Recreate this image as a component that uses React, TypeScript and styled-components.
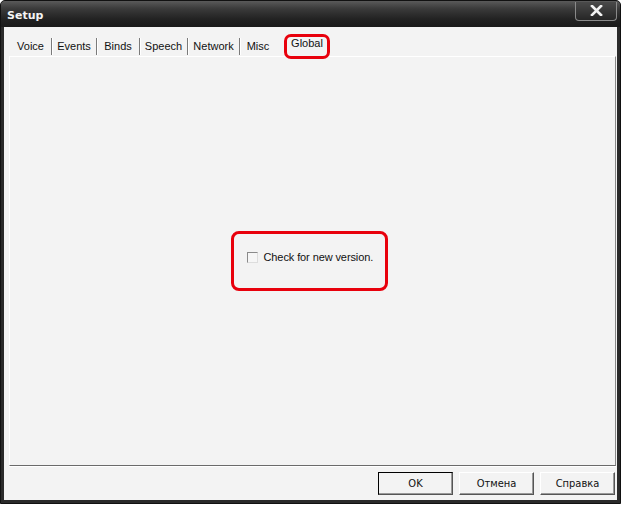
import React from "react";
import styled, { createGlobalStyle } from "styled-components";

const Global = createGlobalStyle`
  html, body { margin: 0; padding: 0; background: #ffffff; }
  body { font-family: "Liberation Sans", Arial, sans-serif; }
`;

const Window = styled.div`
  width: 621px;
  height: 504px;
  box-sizing: border-box;
  background: #2a2a2a;
  border: 1px solid #111;
  border-radius: 5px 5px 0 0;
  display: flex;
  flex-direction: column;
  padding: 0 3px 3px 3px;
`;

const TitleBar = styled.div`
  height: 26px;
  margin: 0 -3px;
  border-radius: 4px 4px 0 0;
  background: linear-gradient(#5a5a5a 0%, #3a3a3a 30%, #222 70%, #1a1a1a 100%);
  display: flex;
  align-items: center;
  justify-content: space-between;
  padding: 0 3px 0 6px;
`;

const Title = styled.span`
  color: #f4f4f4;
  font-family: "DejaVu Sans", sans-serif;
  font-weight: bold;
  font-size: 11px;
  margin-top: 2px;
`;

const CloseButton = styled.div`
  width: 42px;
  height: 19px;
  margin-top: -6px;
  box-sizing: border-box;
  border: 1px solid #8a8a8a;
  border-top: none;
  border-radius: 0 0 4px 4px;
  background: linear-gradient(#4a4a4a, #262626);
  display: flex;
  align-items: center;
  justify-content: center;
`;

const Client = styled.div`
  flex: 1;
  background: #f3f3f3;
  display: flex;
  flex-direction: column;
  padding: 7px 1px 5px 5px;
`;

const TabRow = styled.div`
  display: flex;
  align-items: flex-end;
  height: 22px;
  padding-left: 1px;
`;

const Tab = styled.div<{ $w: number; $sep?: boolean }>`
  width: ${(p) => p.$w}px;
  box-sizing: border-box;
  text-align: center;
  font-size: 11px;
  color: #111;
  height: 17px;
  line-height: 16px;
  margin-bottom: 1px;
  border-right: ${(p) => (p.$sep ? "1px solid #7a7a7a" : "none")};
  box-shadow: ${(p) => (p.$sep ? "1px 0 0 #fff" : "none")};
`;

const SelectedTab = styled.div`
  position: relative;
  width: 46px;
  margin-left: 8px;
  text-align: center;
  font-size: 11px;
  color: #111;
  height: 18px;
  line-height: 17px;
  margin-bottom: 3px;
`;

const Highlight = styled.div`
  position: absolute;
  left: 0;
  right: 0;
  top: -1px;
  bottom: -6px;
  border: 3px solid #e8000c;
  border-radius: 7px;
`;

const Panel = styled.div`
  flex: 1;
  border-top: 1px solid #fff;
  border-left: 1px solid #fff;
  border-right: 1px solid #888;
  border-bottom: 1px solid #6a6a6a;
  box-shadow: 0 1px 0 #fff;
  background: #f3f3f3;
  display: flex;
  align-items: center;
  justify-content: center;
`;

const CheckGroup = styled.div`
  width: 138px;
  height: 46px;
  border: 3px solid #e8000c;
  border-radius: 8px;
  display: flex;
  align-items: center;
  padding: 0 0 8px 13px;
  margin-left: -7px;
  margin-top: 0;
  gap: 6px;
`;

const CheckBox = styled.span`
  width: 9px;
  height: 9px;
  border: 1px solid #8a8a8a;
  border-right-color: #ddd;
  border-bottom-color: #ddd;
  background: #f6f6f6;
`;

const CheckLabel = styled.span`
  font-size: 11px;
  letter-spacing: -0.1px;
  color: #111;
`;

const ButtonRow = styled.div`
  display: flex;
  justify-content: flex-end;
  gap: 6px;
  padding-top: 6px;
  padding-right: 1px;
`;

const Button = styled.div<{ $default?: boolean }>`
  width: 75px;
  height: 23px;
  box-sizing: border-box;
  border: 1px solid ${(p) => (p.$default ? "#000" : "#fff")};
  border-right-color: #555;
  border-bottom-color: #555;
  box-shadow: inset -1px -1px 0 #999;
  background: #f3f3f3;
  display: flex;
  align-items: center;
  justify-content: center;
  font-family: "DejaVu Sans Condensed", "DejaVu Sans", sans-serif;
  font-size: 11px;
  color: #111;
`;

const tabs: [string, number][] = [
  ["Voice", 42],
  ["Events", 45],
  ["Binds", 43],
  ["Speech", 48],
  ["Network", 52],
  ["Misc", 36],
];

export default function App() {
  return (
    <>
      <Global />
      <Window>
        <TitleBar>
          <Title>Setup</Title>
          <CloseButton>
            <svg width="13" height="11" viewBox="0 0 13 11">
              <path d="M2 1 L11 10 M11 1 L2 10" stroke="#f2f2f2" strokeWidth="2.6" strokeLinecap="square" />
            </svg>
          </CloseButton>
        </TitleBar>
        <Client>
          <TabRow>
            {tabs.map(([t, w], i) => (
              <Tab key={t} $w={w} $sep={i < tabs.length - 1}>
                {t}
              </Tab>
            ))}
            <SelectedTab>
              Global
              <Highlight />
            </SelectedTab>
          </TabRow>
          <Panel>
            <CheckGroup>
              <CheckBox />
              <CheckLabel>Check for new version.</CheckLabel>
            </CheckGroup>
          </Panel>
          <ButtonRow>
            <Button $default>OK</Button>
            <Button>Отмена</Button>
            <Button>Справка</Button>
          </ButtonRow>
        </Client>
      </Window>
    </>
  );
}
